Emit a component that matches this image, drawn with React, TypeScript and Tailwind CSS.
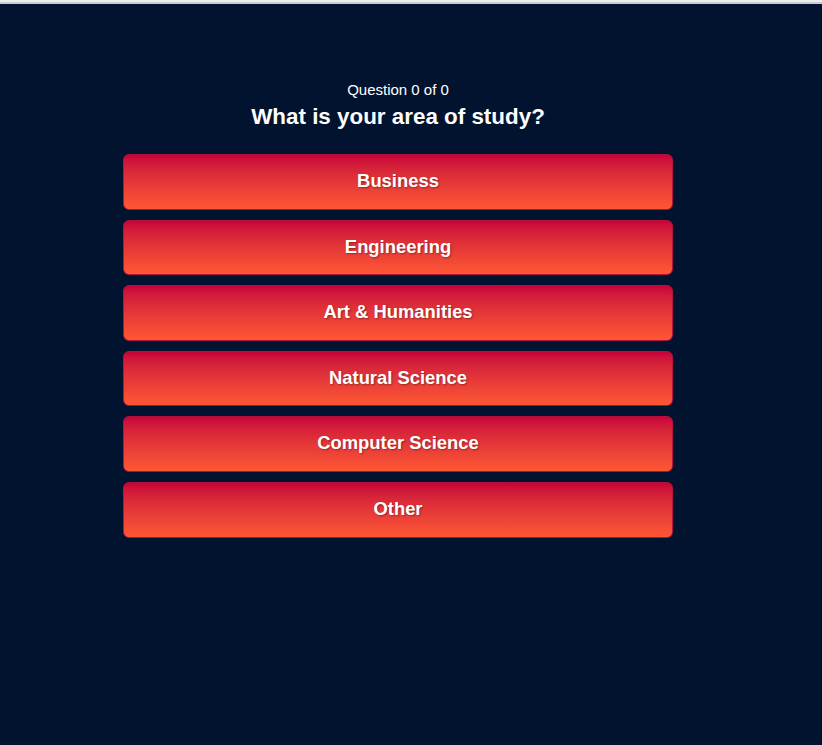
export default function App() {
  const options = [
    "Business",
    "Engineering",
    "Art & Humanities",
    "Natural Science",
    "Computer Science",
    "Other",
  ];

  return (
    <div className="min-h-[745px] bg-[#021330] font-['Liberation_Sans',Arial,sans-serif] text-white">
      {/* browser chrome edge */}
      <div className="h-[2px] bg-[#ececec]" />
      <div className="h-[2px] bg-[#c9cdd2]" />

      <div className="pl-[123px] pt-[76px]">
        <div className="w-[550px]">
          <p className="text-center text-[15px] leading-[20px]">Question 0 of 0</p>
          <h2 className="mt-[3px] text-center text-[22.4px] font-bold leading-[28px]">
            What is your area of study?
          </h2>

          <div className="mt-[23px] flex flex-col gap-[10px]">
            {options.map((o) => (
              <button
                key={o}
                className="h-[55.6px] w-full rounded-[6px] border border-[#b3123a] bg-gradient-to-b from-[#c9003a] to-[#ff5733] pb-[2px] text-[18.4px] font-bold text-white [text-shadow:1px_1px_2px_rgba(0,0,0,0.35)]"
              >
                {o}
              </button>
            ))}
          </div>
        </div>
      </div>
    </div>
  );
}
